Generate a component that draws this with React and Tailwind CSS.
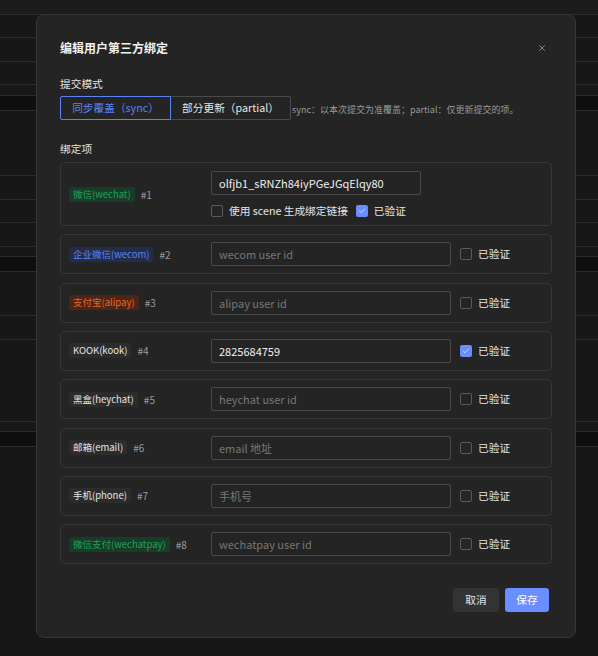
import { useState } from 'react'
import { X, Check } from 'lucide-react'

const FONT = { fontFamily: '"Noto Sans CJK SC", "Noto Sans", sans-serif' }

// rows of the table that sits behind the dialog
const bgRows = [
  { h: 'h-[14px]', cls: 'bg-[#1c1c1c]' },
  { h: 'h-[23px]', cls: 'border-t border-[#2c2c2c]' },
  { h: 'h-[24px]', cls: 'border-t border-[#2c2c2c]' },
  { h: 'h-[23px]', cls: 'border-t border-[#2c2c2c]' },
  { h: 'h-[11px]', cls: 'border-t border-[#2c2c2c]' },
  { h: 'h-[15px]', cls: 'border-t border-[#2c2c2c] bg-[#0e0e0e]' },
  { h: 'h-[65px]', cls: 'border-t border-[#2c2c2c]' },
  { h: 'h-[24px]', cls: 'border-t border-[#2c2c2c]' },
  { h: 'h-[23px]', cls: 'border-t border-[#2c2c2c]' },
  { h: 'h-[24px]', cls: 'border-t border-[#2c2c2c]' },
  { h: 'h-[10px]', cls: 'border-t border-[#2c2c2c]' },
  { h: 'h-[15px]', cls: 'border-t border-[#2c2c2c] bg-[#0e0e0e]' },
  { h: 'h-[44px]', cls: 'border-t border-[#2c2c2c]' },
  { h: 'h-[24px]', cls: 'border-t border-[#2c2c2c]' },
  { h: 'h-[82px]', cls: 'border-t border-[#2c2c2c]' },
  { h: 'h-[10px]', cls: 'border-t border-[#2c2c2c]' },
  { h: 'h-[15px]', cls: 'border-t border-[#2c2c2c] bg-[#0e0e0e]' },
  { h: 'h-[210px]', cls: 'border-t border-[#2c2c2c]' },
]

const bindings = [
  { label: '企业微信(wecom)', n: 2, chip: 'bg-[#232d4a] text-[#5b83f5]', placeholder: 'wecom user id', value: '', verified: false },
  { label: '支付宝(alipay)', n: 3, chip: 'bg-[#4f2414] text-[#e2692e]', placeholder: 'alipay user id', value: '', verified: false },
  { label: 'KOOK(kook)', n: 4, chip: 'bg-[#2c2c2c] text-[#e6e6e6]', placeholder: 'kook user id', value: '2825684759', verified: true },
  { label: '黑盒(heychat)', n: 5, chip: 'bg-[#2c2c2c] text-[#e6e6e6]', placeholder: 'heychat user id', value: '', verified: false },
  { label: '邮箱(email)', n: 6, chip: 'bg-[#2c2c2c] text-[#e6e6e6]', placeholder: 'email 地址', value: '', verified: false },
  { label: '手机(phone)', n: 7, chip: 'bg-[#2c2c2c] text-[#e6e6e6]', placeholder: '手机号', value: '', verified: false },
  { label: '微信支付(wechatpay)', n: 8, chip: 'bg-[#173d29] text-[#24a05a]', placeholder: 'wechatpay user id', value: '', verified: false },
]

function Checkbox({ checked }) {
  return (
    <span
      className={
        'w-[12px] h-[12px] rounded-[2px] flex items-center justify-center flex-shrink-0 ' +
        (checked ? 'bg-[#6a8dff]' : 'border border-[#5a5a5a]')
      }
    >
      {checked && <Check className="w-[8px] h-[8px] text-white" strokeWidth={2} />}
    </span>
  )
}

function Label({ label, n, chip }) {
  return (
    <div className="w-[142px] flex items-center gap-[6px] flex-shrink-0">
      <span className={'px-[4px] h-[15px] leading-[15px] rounded-[2px] text-[9.5px] ' + chip}>{label}</span>
      <span className="text-[10px] text-[#9a9a9a]">#{n}</span>
    </div>
  )
}

function TextInput({ value, placeholder, width }) {
  const [v, setV] = useState(value)
  return (
    <input
      value={v}
      onChange={(e) => setV(e.target.value)}
      placeholder={placeholder}
      className={
        width +
        ' h-[24px] px-[7px] bg-transparent border border-[#4a4a4a] rounded-[2px] text-[11px] text-[#f0f0f0] placeholder:text-[#777777] outline-none'
      }
    />
  )
}

export default function App() {
  const [mode, setMode] = useState('sync')

  return (
    <div className="relative w-[598px] h-[656px] bg-[#171717] overflow-hidden" style={FONT}>
      {/* page behind the dialog */}
      <div className="flex flex-col">
        {bgRows.map((r, i) => (
          <div key={i} className={r.h + ' ' + r.cls} />
        ))}
      </div>

      {/* dialog */}
      <div className="absolute left-[36px] top-[14px] w-[540px] h-[624px] bg-[#242424] border border-[#363636] rounded-[8px] px-[23px] pt-[23px]">
        <div className="flex items-center justify-between h-[20px]">
          <h2 className="text-[12px] font-bold text-[#f2f2f2]">编辑用户第三方绑定</h2>
          <button className="mr-[5px] text-[#9a9a9a]">
            <X className="w-[10px] h-[10px]" strokeWidth={2} />
          </button>
        </div>

        <div className="mt-[17px] h-[18px] leading-[18px] text-[10.7px] text-[#e6e6e6]">提交模式</div>
        <div className="mt-[3px] flex items-center">
          <button
            onClick={() => setMode('sync')}
            className={
              'w-[111px] h-[24px] text-[10.7px] rounded-l-[2px] border ' +
              (mode === 'sync' ? 'border-[#5b83f5] text-[#5b83f5]' : 'border-[#4a4a4a] text-[#e6e6e6]')
            }
          >
            同步覆盖（sync）
          </button>
          <button
            onClick={() => setMode('partial')}
            className={
              'w-[120px] h-[24px] text-[10.7px] rounded-r-[2px] border border-l-0 ' +
              (mode === 'partial' ? 'border-[#5b83f5] text-[#5b83f5]' : 'border-[#4a4a4a] text-[#e6e6e6]')
            }
          >
            部分更新（partial）
          </button>
          <span className="ml-[1px] mt-[4px] text-[9px] text-[#9a9a9a]">sync：以本次提交为准覆盖；partial：仅更新提交的项。</span>
        </div>

        <div className="mt-[20px] h-[18px] leading-[18px] text-[10.7px] text-[#e6e6e6]">绑定项</div>

        <div className="mt-[4px] flex flex-col gap-[8.33px]">
          {/* wechat row has the extra scene option */}
          <div className="h-[64px] border border-[#363636] rounded-[5px] px-[8px] flex items-center">
            <Label label="微信(wechat)" n={1} chip="bg-[#173d29] text-[#24a05a]" />
            <div className="flex flex-col gap-[8px] pt-[2px]">
              <TextInput value="olfjb1_sRNZh84iyPGeJGqElqy80" placeholder="wechat openid" width="w-[210px]" />
              <div className="flex items-center">
                <Checkbox checked={false} />
                <span className="ml-[6px] text-[10.7px] text-[#e6e6e6]">使用 scene 生成绑定链接</span>
                <span className="ml-[8px]">
                  <Checkbox checked />
                </span>
                <span className="ml-[6px] text-[10.7px] text-[#e6e6e6]">已验证</span>
              </div>
            </div>
          </div>

          {bindings.map((b) => (
            <div key={b.n} className="h-[40px] border border-[#363636] rounded-[5px] px-[8px] flex items-center">
              <Label label={b.label} n={b.n} chip={b.chip} />
              <TextInput value={b.value} placeholder={b.placeholder} width="w-[240px]" />
              <span className="ml-[9px]">
                <Checkbox checked={b.verified} />
              </span>
              <span className="ml-[6px] text-[10.7px] text-[#e6e6e6]">已验证</span>
            </div>
          ))}
        </div>

        <div className="mt-[24px] flex justify-end gap-[6px] mr-[3px]">
          <button className="w-[46px] h-[24px] rounded-[3px] bg-[#333333] text-[10.7px] text-[#e6e6e6]">取消</button>
          <button className="w-[44px] h-[24px] rounded-[3px] bg-[#6a8dff] text-[10.7px] text-white">保存</button>
        </div>
      </div>
    </div>
  )
}
